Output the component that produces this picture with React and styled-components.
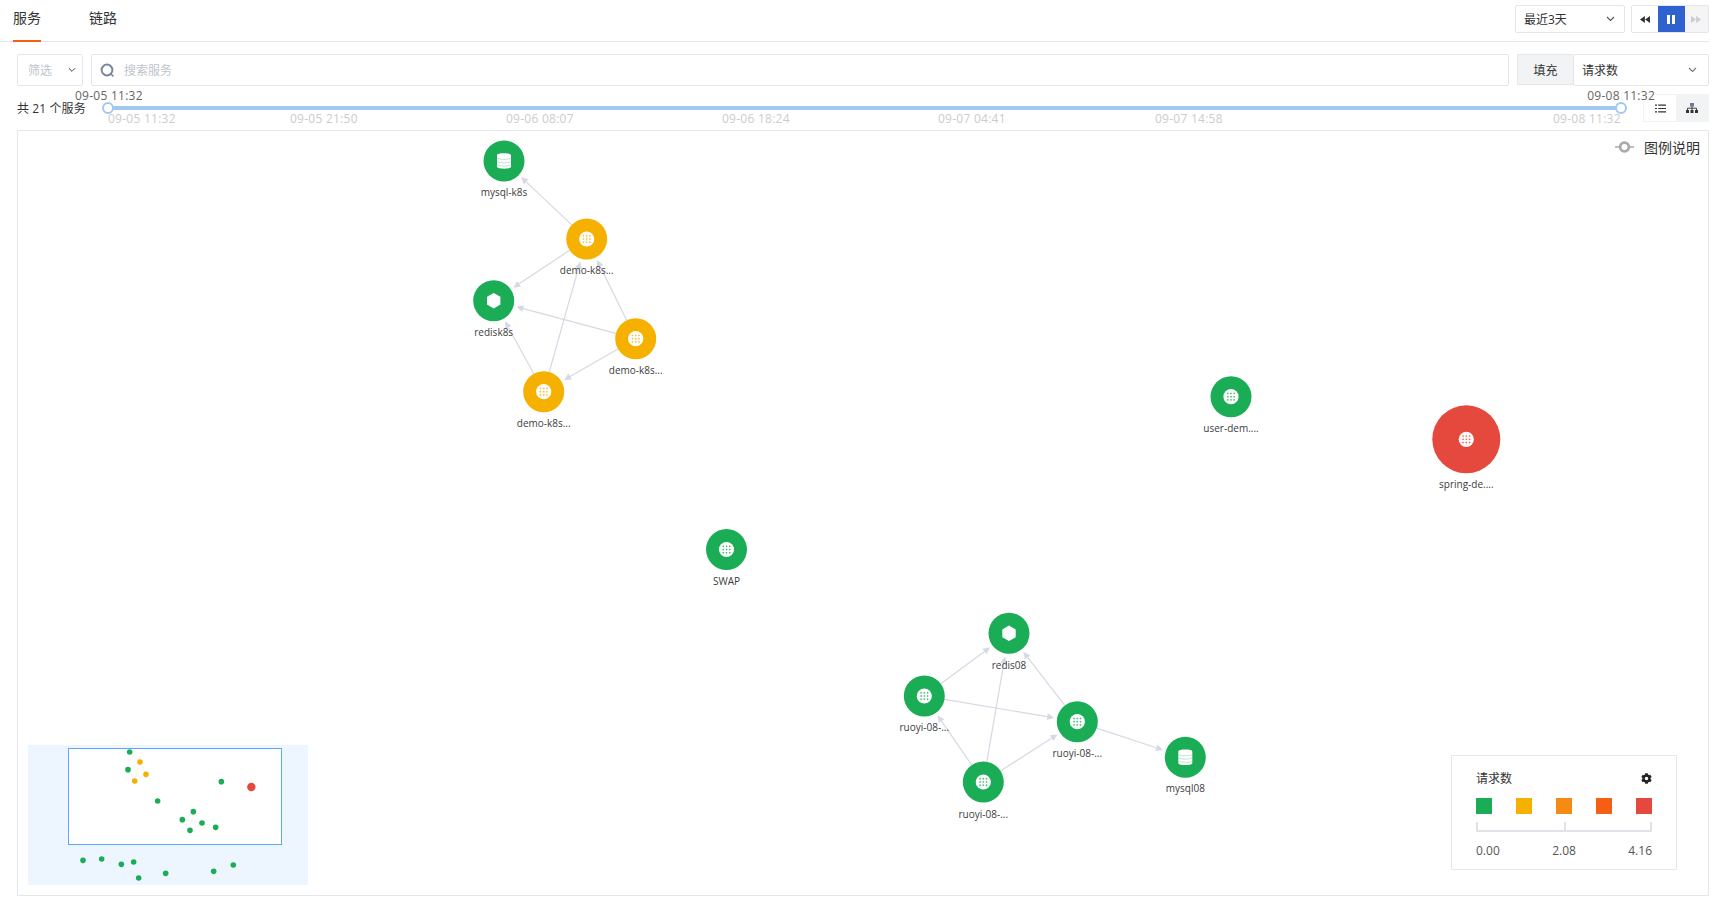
import React from "react";
import styled, { createGlobalStyle } from "styled-components";
import { FaCog } from "react-icons/fa";

const FONT = `"Open Sans", "Noto Sans CJK SC", sans-serif`;
const GREEN = "#1aad55";
const AMBER = "#f5b000";
const RED = "#e5483c";
const BORDER = "#e4e6eb";

const Global = createGlobalStyle`
  html, body { margin: 0; padding: 0; background: #fff; overflow: hidden; }
  * { box-sizing: border-box; }
  body { font-family: ${FONT}; font-size: 12px; color: #333; }
`;

const Page = styled.div`
  width: 1715px;
  height: 902px;
  display: flex;
  flex-direction: column;
`;

const TabBar = styled.div`
  height: 42px;
  margin-right: 6px;
  display: flex;
  justify-content: space-between;
  border-bottom: 1px solid ${BORDER};
  padding-left: 13px;
`;
const Tabs = styled.div`
  display: flex;
  gap: 48px;
`;
const Tab = styled.div`
  height: 42px;
  width: 28px;
  font-size: 14px;
  line-height: 36px;
  color: #333;
  white-space: nowrap;
  border-bottom: 2px solid ${(p) => (p.$active ? "#f5610f" : "transparent")};
`;
const TabTools = styled.div`
  display: flex;
  gap: 6px;
  padding-top: 5px;
`;
const SelectBox = styled.div`
  width: ${(p) => p.$width}px;
  height: ${(p) => p.$height}px;
  border: 1px solid ${BORDER};
  border-radius: 2px;
  padding: 0 ${(p) => p.$pr}px 0 ${(p) => p.$pl}px;
  display: flex;
  align-items: center;
  justify-content: space-between;
  font-size: 12px;
  color: ${(p) => (p.$muted ? "#c0c4cc" : "#333")};
  background: #fff;
`;
const PlayGroup = styled.div`
  width: 78px;
  height: 28px;
  display: flex;
  border: 1px solid ${BORDER};
  border-radius: 2px;
  overflow: hidden;
`;
const PlayButton = styled.div`
  flex: ${(p) => p.$flex};
  display: flex;
  align-items: center;
  justify-content: center;
  background: ${(p) => p.$bg};
`;

const FilterRow = styled.div`
  margin: 12px 6px 0 17px;
  height: 32px;
  display: flex;
`;
const SearchBox = styled.div`
  width: 1418px;
  height: 32px;
  margin: 0 8px;
  border: 1px solid ${BORDER};
  border-radius: 2px;
  padding-left: 8px;
  display: flex;
  align-items: center;
  gap: 9px;
  color: #c0c4cc;
`;
const FillLabel = styled.div`
  width: 56px;
  height: 31px;
  display: flex;
  align-items: center;
  justify-content: center;
  background: #f1f3f5;
  border: 1px solid ${BORDER};
  border-right: 0;
  color: #333;
`;

const TimeRow = styled.div`
  position: relative;
  height: 44px;
  margin: 0 6px 0 17px;
  display: flex;
  align-items: center;
`;
const Count = styled.div`
  white-space: nowrap;
  color: #333;
  letter-spacing: 0.1px;
`;
const Track = styled.div`
  position: absolute;
  left: 91px;
  top: 20px;
  width: 1513px;
  height: 4px;
  background: #a3c8f0;
`;
const Handle = styled.div`
  position: absolute;
  top: -4px;
  ${(p) => (p.$end ? "right: -6px;" : "left: -6px;")}
  width: 12px;
  height: 12px;
  border-radius: 50%;
  background: #fff;
  border: 2px solid #a3c8f0;
`;
const RangeLabel = styled.div`
  position: absolute;
  top: -19px;
  ${(p) => (p.$end ? "right: -34px;" : "left: -33px;")}
  color: #666;
  white-space: nowrap;
  letter-spacing: 0.25px;
  z-index: 2;
`;
const TickLabel = styled.div`
  position: absolute;
  top: 4px;
  color: #ccc;
  white-space: nowrap;
  letter-spacing: 0.25px;
`;
const ViewToggle = styled.div`
  position: absolute;
  right: 0;
  top: 8px;
  width: 66px;
  height: 28px;
  display: flex;
  border: 1px solid #f1f3f5;
`;
const ViewButton = styled.div`
  flex: 1;
  display: flex;
  align-items: center;
  justify-content: center;
  background: ${(p) => (p.$active ? "#f1f3f5" : "#fff")};
`;

const Canvas = styled.div`
  position: relative;
  flex: none;
  height: 766px;
  margin: 0 6px 0 17px;
  border: 1px solid ${BORDER};
`;
const Graph = styled.svg`
  position: absolute;
  left: 0;
  top: 0;
  display: block;
`;
const EdgeLine = styled.line`
  stroke: #d8d8e4;
  stroke-width: 1.2;
`;
const EdgeHead = styled.polygon`
  fill: #d8d8e4;
`;
const NodeCircle = styled.circle`
  fill: ${(p) => p.$color};
`;
const NodeLabel = styled.text`
  font-family: ${FONT};
  font-size: 10px;
  fill: #3c3c3c;
  text-anchor: middle;
  dominant-baseline: central;
`;
const LegendKey = styled.div`
  position: absolute;
  top: 6px;
  right: 8px;
  height: 20px;
  display: flex;
  align-items: center;
  gap: 10px;
  font-size: 14px;
  color: #333;
`;
const Minimap = styled.div`
  position: absolute;
  left: 10px;
  bottom: 10px;
  width: 280px;
  height: 140px;
  background: #edf5ff;
`;
const MiniViewport = styled.div`
  position: absolute;
  left: 40px;
  top: 3px;
  width: 214px;
  height: 97px;
  background: #fff;
  border: 1px solid #5ba8ff;
`;
const MiniSvg = styled.svg`
  position: absolute;
  left: 0;
  top: 0;
  display: block;
`;
const Legend = styled.div`
  position: absolute;
  right: 31px;
  bottom: 25px;
  width: 226px;
  height: 115px;
  background: #fff;
  border: 1px solid ${BORDER};
  padding: 13px 24px 0;
`;
const LegendHead = styled.div`
  height: 18px;
  display: flex;
  align-items: center;
  justify-content: space-between;
  color: #333;
`;
const Swatches = styled.div`
  margin-top: 11px;
  display: flex;
  justify-content: space-between;
`;
const Swatch = styled.div`
  width: 16px;
  height: 16px;
  background: ${(p) => p.$color};
`;
const Scale = styled.div`
  position: relative;
  margin-top: 8px;
  height: 10px;
  border: 2px solid #e0e3e8;
  border-top: 0;
  &::after {
    content: "";
    position: absolute;
    left: 50%;
    top: 0;
    bottom: 0;
    width: 2px;
    background: #e0e3e8;
  }
`;
const ScaleValues = styled.div`
  margin-top: 10px;
  display: flex;
  justify-content: space-between;
  color: #555;
`;

const Chevron = ({ color = "#555", w = 9 }) => (
  <svg width={w} height="6" viewBox="0 0 9 6">
    <path d="M1 1l3.5 3.5L8 1" fill="none" stroke={color} strokeWidth="1.1" />
  </svg>
);

const nodes = {
  mysqlK: { x: 504, y: 161, r: 20.5, c: GREEN, i: "db", t: "mysql-k8s", ly: 192 },
  demo1: { x: 586.7, y: 239, r: 20.5, c: AMBER, i: "globe", t: "demo-k8s...", ly: 270 },
  redisK: { x: 493.7, y: 300.7, r: 20.5, c: GREEN, i: "hex", t: "redisk8s", ly: 332 },
  demo2: { x: 635.7, y: 338.7, r: 20.5, c: AMBER, i: "globe", t: "demo-k8s...", ly: 370 },
  demo3: { x: 543.7, y: 391.7, r: 20.5, c: AMBER, i: "globe", t: "demo-k8s...", ly: 422.7 },
  user: { x: 1231, y: 396.7, r: 20.5, c: GREEN, i: "globe", t: "user-dem....", ly: 428 },
  spring: { x: 1466.3, y: 439.3, r: 34, c: RED, i: "globe", t: "spring-de....", ly: 484 },
  swap: { x: 726.5, y: 549.5, r: 20.5, c: GREEN, i: "globe", t: "SWAP", ly: 581 },
  redis8: { x: 1009, y: 633.3, r: 20.5, c: GREEN, i: "hex", t: "redis08", ly: 664.7 },
  ruoyi1: { x: 924.3, y: 696, r: 20.5, c: GREEN, i: "globe", t: "ruoyi-08-...", ly: 727 },
  ruoyi2: { x: 1077.3, y: 721.7, r: 20.5, c: GREEN, i: "globe", t: "ruoyi-08-...", ly: 752.7 },
  ruoyi3: { x: 983.3, y: 782, r: 20.5, c: GREEN, i: "globe", t: "ruoyi-08-...", ly: 813.7 },
  mysql8: { x: 1185.3, y: 757.3, r: 20.5, c: GREEN, i: "db", t: "mysql08", ly: 787.7 },
};
const edges = [
  ["demo1", "mysqlK"], ["demo1", "redisK"], ["demo2", "demo1"], ["demo2", "redisK"],
  ["demo2", "demo3"], ["demo3", "redisK"], ["demo3", "demo1"],
  ["ruoyi1", "redis8"], ["ruoyi1", "ruoyi2"], ["ruoyi2", "redis8"], ["ruoyi2", "mysql8"],
  ["ruoyi3", "ruoyi1"], ["ruoyi3", "redis8"], ["ruoyi3", "ruoyi2"],
];
const OX = 18;
const OY = 131;

const Edge = ({ from, to }) => {
  const a = nodes[from];
  const b = nodes[to];
  const dx = b.x - a.x;
  const dy = b.y - a.y;
  const d = Math.hypot(dx, dy);
  const ux = dx / d;
  const uy = dy / d;
  const tip = [b.x - ux * (b.r + 3), b.y - uy * (b.r + 3)];
  const base = [tip[0] - ux * 7, tip[1] - uy * 7];
  const head = [
    tip,
    [base[0] - uy * 3.4, base[1] + ux * 3.4],
    [base[0] + uy * 3.4, base[1] - ux * 3.4],
  ].map((p) => p.join(",")).join(" ");
  return (
    <g>
      <EdgeLine x1={a.x + ux * a.r} y1={a.y + uy * a.r} x2={base[0]} y2={base[1]} />
      <EdgeHead points={head} />
    </g>
  );
};

const NodeIcon = ({ kind, color }) => {
  if (kind === "db") {
    return (
      <g>
        <path d="M-7-5.6C-7-7.2-3.8-7.7 0-7.7S7-7.2 7-5.6V5.6C7 7.2 3.8 7.7 0 7.7S-7 7.2-7 5.6Z" fill="#fff" />
        <path d="M-7-2.6C-4-1.2 4-1.2 7-2.6M-7 .8C-4 2.2 4 2.2 7 .8M-7 4C-4 5.4 4 5.4 7 4" fill="none" stroke={color} strokeWidth="0.7" opacity="0.4" />
      </g>
    );
  }
  if (kind === "hex") {
    return <polygon points="0,-7.8 6.7,-3.9 6.7,3.9 0,7.8 -6.7,3.9 -6.7,-3.9" fill="#fff" />;
  }
  const dots = [];
  [-3.2, 0, 3.2].forEach((x) =>
    [-3.2, 0, 3.2].forEach((y) => dots.push([x, y]))
  );
  return (
    <g>
      <circle r="7.6" fill="#fff" />
      {dots.map(([x, y]) => (
        <rect key={`${x}${y}`} x={x - 0.7} y={y - 0.7} width="1.4" height="1.4" fill={color} opacity="0.8" />
      ))}
      <path d="M-3.2-6.3V6.3M0-7.4V7.4M3.2-6.3V6.3M-6.3-3.2H6.3M-7.4 0H7.4M-6.3 3.2H6.3" stroke={color} strokeWidth="0.4" opacity="0.2" fill="none" />
    </g>
  );
};

const miniDots = [
  [359, 66], [390, 96, AMBER], [354, 119], [408, 133, AMBER], [374, 153, AMBER], [634, 155],
  [724, 171, RED, 4.2], [443, 213], [550, 245], [517, 269], [576, 279], [617, 292], [540, 301],
  [219, 391], [275, 387], [334, 403], [371, 396], [386, 444], [467, 430], [611, 424], [670, 405],
].map(([x, y, c = GREEN, r = 2.8]) => ({ x: x / 3 - 18, y: y / 3 - 15, c, r }));
const miniLines = [[0, 1], [1, 2], [1, 3], [3, 4], [2, 4], [1, 4], [8, 9], [8, 10], [9, 10], [10, 11], [9, 12], [10, 12], [8, 12]];

const ticks = [
  { t: "09-05 11:32", x: 0 },
  { t: "09-05 21:50", x: 182 },
  { t: "09-06 08:07", x: 398 },
  { t: "09-06 18:24", x: 614 },
  { t: "09-07 04:41", x: 830 },
  { t: "09-07 14:58", x: 1047 },
  { t: "09-08 11:32", x: 1445 },
];

export default function App() {
  return (
    <Page>
      <Global />
      <TabBar>
        <Tabs>
          <Tab $active>服务</Tab>
          <Tab>链路</Tab>
        </Tabs>
        <TabTools>
          <SelectBox $width={110} $height={28} $pl={8} $pr={9}>
            <span>最近3天</span>
            <Chevron />
          </SelectBox>
          <PlayGroup>
            <PlayButton $flex="27" $bg="#fff">
              <svg width="10" height="7" viewBox="0 0 10 7"><path d="M4.9 0v7L0 3.5zM10 0v7L5.1 3.5z" fill="#333" /></svg>
            </PlayButton>
            <PlayButton $flex="27" $bg="#2f62cf">
              <svg width="8" height="9" viewBox="0 0 8 9"><path d="M0 0h3v9H0zM5 0h3v9H5z" fill="#fff" /></svg>
            </PlayButton>
            <PlayButton $flex="24" $bg="#f5f5f6">
              <svg width="10" height="7" viewBox="0 0 10 7"><path d="M0 0v7l4.9-3.5zM5.1 0v7L10 3.5z" fill="#c8ccd6" /></svg>
            </PlayButton>
          </PlayGroup>
        </TabTools>
      </TabBar>

      <FilterRow>
        <SelectBox $width={66} $height={32} $pl={10} $pr={6} $muted>
          <span>筛选</span>
          <Chevron color="#444" w={8} />
        </SelectBox>
        <SearchBox>
          <svg width="15" height="15" viewBox="0 0 15 15">
            <circle cx="7" cy="7" r="5.4" fill="none" stroke="#7c879e" strokeWidth="2" />
            <path d="M11 11l2.4 2.4" stroke="#7c879e" strokeWidth="1.6" />
          </svg>
          <span>搜索服务</span>
        </SearchBox>
        <FillLabel>填充</FillLabel>
        <SelectBox $width={136} $height={32} $pl={8} $pr={11}>
          <span>请求数</span>
          <Chevron color="#777" w={9} />
        </SelectBox>
      </FilterRow>

      <TimeRow>
        <Count>共 21 个服务</Count>
        <Track>
          <RangeLabel>09-05 11:32</RangeLabel>
          <RangeLabel $end>09-08 11:32</RangeLabel>
          <Handle />
          <Handle $end />
          {ticks.map((k) => (
            <TickLabel key={k.t} style={{ left: k.x }}>{k.t}</TickLabel>
          ))}
        </Track>
        <ViewToggle>
          <ViewButton>
            <svg width="11" height="9" viewBox="0 0 11 9">
              <path d="M0 .5h2v1.2H0zM0 3.9h2v1.2H0zM0 7.3h2v1.2H0zM3.2.5H11v1.2H3.2zM3.2 3.9H11v1.2H3.2zM3.2 7.3H11v1.2H3.2z" fill="#333" />
            </svg>
          </ViewButton>
          <ViewButton $active>
            <svg width="12" height="10" viewBox="0 0 12 10">
              <path d="M4 0h4v3.6H4z" fill="#6b7a90" />
              <path d="M0 7h3v3H0zM4.5 7h3v3h-3zM9 7h3v3H9z" fill="#333" />
              <path d="M6 3.6V7M1.5 7V5.2h9V7" fill="none" stroke="#333" strokeWidth="0.9" />
            </svg>
          </ViewButton>
        </ViewToggle>
      </TimeRow>

      <Canvas>
        <Graph width="1690" height="764" viewBox={`${OX} ${OY} 1690 764`}>
          {edges.map(([a, b]) => (
            <Edge key={a + b} from={a} to={b} />
          ))}
          {Object.entries(nodes).map(([id, n]) => (
            <g key={id}>
              <NodeCircle cx={n.x} cy={n.y} r={n.r} $color={n.c} />
              <g transform={`translate(${n.x} ${n.y})`}>
                <NodeIcon kind={n.i} color={n.c} />
              </g>
              <NodeLabel x={n.x} y={n.ly}>{n.t}</NodeLabel>
            </g>
          ))}
        </Graph>
        <LegendKey>
          <svg width="19" height="12" viewBox="0 0 19 12">
            <path d="M0 6h4M15 6h4" stroke="#aaa" strokeWidth="1.4" />
            <circle cx="9.5" cy="6" r="4.4" fill="none" stroke="#aaa" strokeWidth="2.8" />
          </svg>
          <span>图例说明</span>
        </LegendKey>
        <Minimap>
          <MiniViewport />
          <MiniSvg width="280" height="140" viewBox="0 0 280 140">
            {miniLines.map(([a, b]) => (
              <line
                key={`${a}-${b}`}
                x1={miniDots[a].x}
                y1={miniDots[a].y}
                x2={miniDots[b].x}
                y2={miniDots[b].y}
                stroke="#eeeef2"
                strokeWidth="0.6"
              />
            ))}
            {miniDots.map((d) => (
              <circle key={`${d.x}-${d.y}`} cx={d.x} cy={d.y} r={d.r} fill={d.c} />
            ))}
          </MiniSvg>
        </Minimap>
        <Legend>
          <LegendHead>
            <span>请求数</span>
            <FaCog size={11} color="#222" />
          </LegendHead>
          <Swatches>
            {[GREEN, AMBER, "#f58a14", "#f55f14", RED].map((c) => (
              <Swatch key={c} $color={c} />
            ))}
          </Swatches>
          <Scale />
          <ScaleValues>
            <span>0.00</span>
            <span>2.08</span>
            <span>4.16</span>
          </ScaleValues>
        </Legend>
      </Canvas>
    </Page>
  );
}
